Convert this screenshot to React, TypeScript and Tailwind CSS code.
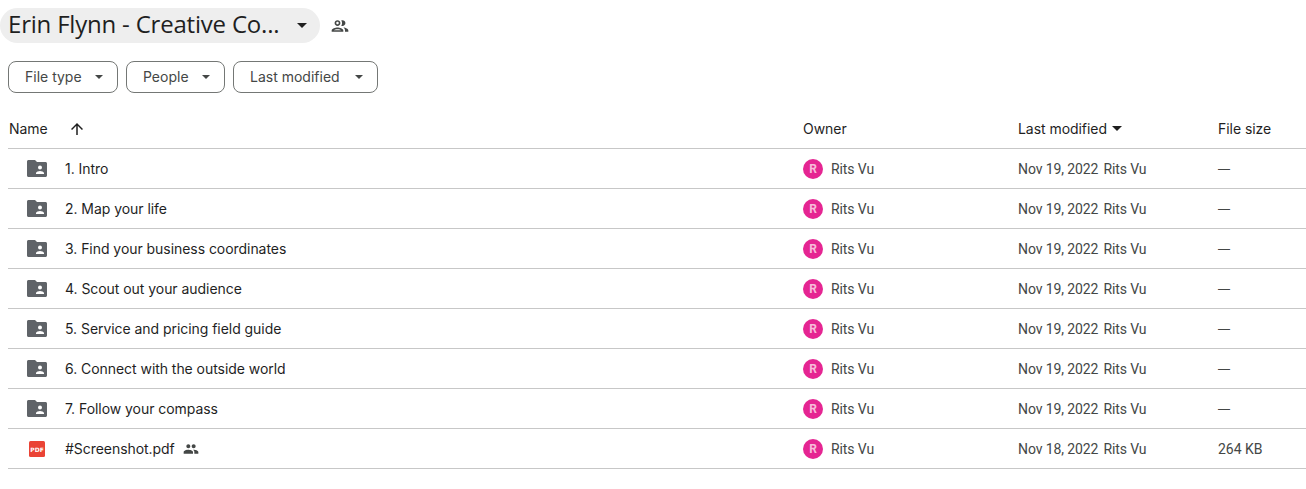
import React from 'react';

const rows = [
  { name: '1. Intro', date: 'Nov 19, 2022', size: '—' },
  { name: '2. Map your life', date: 'Nov 19, 2022', size: '—' },
  { name: '3. Find your business coordinates', date: 'Nov 19, 2022', size: '—' },
  { name: '4. Scout out your audience', date: 'Nov 19, 2022', size: '—' },
  { name: '5. Service and pricing field guide', date: 'Nov 19, 2022', size: '—' },
  { name: '6. Connect with the outside world', date: 'Nov 19, 2022', size: '—' },
  { name: '7. Follow your compass', date: 'Nov 19, 2022', size: '—' },
  { name: '#Screenshot.pdf', date: 'Nov 18, 2022', size: '264 KB', pdf: true },
];

const Caret = ({ className }: { className: string }) => (
  <svg viewBox="0 0 10 5" className={className} fill="currentColor">
    <path d="M0 0h10L5 5z" />
  </svg>
);

const SharedFolder = () => (
  <svg width="20" height="20" viewBox="0 0 20 20" className="text-[#5f6368]">
    <path
      fill="currentColor"
      fillRule="evenodd"
      d="M1.500 1h6.500l2 2h8.500c.8 0 1.500.7 1.500 1.500v12c0 .8-.7 1.500-1.500 1.500h-17c-.8 0-1.500-.7-1.500-1.500v-14c0-.8.7-1.500 1.500-1.500zm11.500 5.500a2 2 0 1 0 0 4 2 2 0 0 0 0-4zM9 15h8v-1c0-1.300-2.700-2-4-2s-4 .7-4 2z"
    />
  </svg>
);

const PdfIcon = () => (
  <svg width="16" height="16" viewBox="0 0 16 16">
    <rect width="16" height="16" rx="1.500" fill="#ea4335" />
    <text x="8" y="10.500" textAnchor="middle" fill="#fff" fontSize="6" fontWeight="700" fontFamily="'DejaVu Sans', sans-serif">
      PDF
    </text>
  </svg>
);

const PeopleFilled = () => (
  <svg width="16" height="16" viewBox="0 0 24 24" fill="#444746">
    <path d="M16 11c1.660 0 2.990-1.340 2.990-3S17.660 5 16 5s-3 1.340-3 3 1.340 3 3 3zm-8 0c1.660 0 2.990-1.340 2.990-3S9.660 5 8 5 5 6.340 5 8s1.340 3 3 3zm0 2c-2.330 0-7 1.170-7 3.500V19h14v-2.500C15 14.170 10.330 13 8 13zm8 0c-.290 0-.620.020-.970.050 1.160.840 1.970 1.970 1.970 3.450V19h6v-2.500c0-2.330-4.670-3.500-7-3.500z" />
  </svg>
);

const PeopleOutline = () => (
  <svg width="20" height="20" viewBox="0 0 24 24" fill="#444746">
    <path d="M9 13.750c-2.340 0-7 1.170-7 3.500V19h14v-1.750c0-2.330-4.660-3.500-7-3.500zM4.340 17c.84-.580 2.870-1.250 4.660-1.250s3.820.670 4.660 1.250H4.340zM9 12c1.930 0 3.500-1.570 3.500-3.500S10.930 5 9 5 5.500 6.570 5.500 8.500 7.070 12 9 12zm0-5c.830 0 1.500.670 1.500 1.500S9.830 10 9 10s-1.500-.670-1.500-1.500S8.170 7 9 7zm7.040 6.810c1.160.840 1.960 1.960 1.960 3.440V19h4v-1.750c0-2.020-3.500-3.170-5.960-3.440zM15 12c1.930 0 3.500-1.570 3.500-3.500S16.930 5 15 5c-.540 0-1.040.130-1.500.350.630.890 1 1.980 1 3.150s-.370 2.260-1 3.150c.460.220.960.350 1.500.350z" />
  </svg>
);

const Filter = ({ label, width }: { label: string; width: string }) => (
  <button className={`flex h-8 items-center justify-between rounded-lg border border-[#747775] pl-4 pr-[14px] font-['Inter',sans-serif] text-sm text-[#444746] ${width}`}>
    <span>{label}</span>
    <Caret className="h-[4px] w-[8px]" />
  </button>
);

export default function App() {
  return (
    <div className="h-[489px] w-[1306px] overflow-hidden bg-white font-['Roboto',sans-serif] text-[#1f1f1f]">
      {/* breadcrumb */}
      <div className="flex items-center pt-2">
        <div className="flex h-[35px] w-[320px] items-center justify-between rounded-[18px] bg-[#eeeeee] pl-2 pr-[13px]">
          <span className="-mt-[3px] font-['Open_Sans',sans-serif] text-[24px] leading-7 tracking-[-0.2px]">Erin Flynn - Creative Co...</span>
          <Caret className="h-[5px] w-[10px] text-[#1f1f1f]" />
        </div>
        <div className="ml-[10px]">
          <PeopleOutline />
        </div>
      </div>

      {/* filters */}
      <div className="mt-[18px] flex gap-2 pl-2">
        <Filter label="File type" width="w-[110px]" />
        <Filter label="People" width="w-[99px]" />
        <Filter label="Last modified" width="w-[145px]" />
      </div>

      {/* table */}
      <div className="ml-2 mt-4">
        <div className="grid h-[40px] grid-cols-[795px_215px_200px_1fr] items-center border-b border-[#c7c7c7] font-['Inter',sans-serif] text-sm tracking-[-0.05px]">
          <div className="flex items-center pl-px">
            <span>Name</span>
            <svg width="18" height="18" viewBox="0 0 24 24" className="ml-5" fill="#1f1f1f">
              <path d="M4 12l1.410 1.410L11 7.830V20h2V7.830l5.580 5.590L20 12l-8-8-8 8z" />
            </svg>
          </div>
          <div>Owner</div>
          <div className="flex items-center">
            <span>Last modified</span>
            <Caret className="ml-[5px] h-[5px] w-[10px]" />
          </div>
          <div>File size</div>
        </div>
        {rows.map((row) => (
          <div key={row.name} className="grid h-[40px] grid-cols-[795px_215px_200px_1fr] items-center border-b border-[#c7c7c7] text-sm text-[#444746]">
            <div className="flex items-center text-[#1f1f1f]">
              <div className="flex w-[57px] justify-center">
                <div className="flex w-[20px] justify-center">{row.pdf ? <PdfIcon /> : <SharedFolder />}</div>
              </div>
              <span className="font-['Inter',sans-serif] tracking-[-0.05px]">{row.name}</span>
              {row.pdf && (
                <span className="ml-2">
                  <PeopleFilled />
                </span>
              )}
            </div>
            <div className="flex items-center">
              <div className="mr-2 flex h-5 w-5 items-center justify-center rounded-full bg-[#e52592] text-xs font-bold text-[#f8bbd9]">R</div>
              <span className="tracking-[-0.1px]">Rits Vu</span>
            </div>
            <div className="flex gap-[5px] tracking-[-0.1px]">
              <span>{row.date}</span>
              <span>Rits Vu</span>
            </div>
            <div className={row.pdf ? '' : "font-['Inter',sans-serif] text-xs"}>{row.size}</div>
          </div>
        ))}
      </div>
    </div>
  );
}
